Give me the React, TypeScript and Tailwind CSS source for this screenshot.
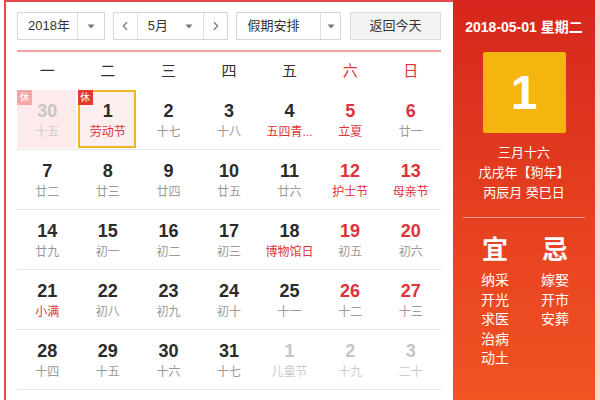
import { ChevronLeft, ChevronRight } from 'lucide-react';

type Day = {
  num: number;
  lunar: string;
  red?: boolean;
  festival?: boolean;
  other?: boolean;
  selected?: boolean;
  badge?: string;
};

const weekdays = ['一', '二', '三', '四', '五', '六', '日'];

const rows: Day[][] = [
  [
    { num: 30, lunar: '十五', other: true, badge: '休' },
    { num: 1, lunar: '劳动节', festival: true, selected: true, badge: '休' },
    { num: 2, lunar: '十七' },
    { num: 3, lunar: '十八' },
    { num: 4, lunar: '五四青...', festival: true },
    { num: 5, lunar: '立夏', red: true, festival: true },
    { num: 6, lunar: '廿一', red: true },
  ],
  [
    { num: 7, lunar: '廿二' },
    { num: 8, lunar: '廿三' },
    { num: 9, lunar: '廿四' },
    { num: 10, lunar: '廿五' },
    { num: 11, lunar: '廿六' },
    { num: 12, lunar: '护士节', red: true, festival: true },
    { num: 13, lunar: '母亲节', red: true, festival: true },
  ],
  [
    { num: 14, lunar: '廿九' },
    { num: 15, lunar: '初一' },
    { num: 16, lunar: '初二' },
    { num: 17, lunar: '初三' },
    { num: 18, lunar: '博物馆日', festival: true },
    { num: 19, lunar: '初五', red: true },
    { num: 20, lunar: '初六', red: true },
  ],
  [
    { num: 21, lunar: '小满', festival: true },
    { num: 22, lunar: '初八' },
    { num: 23, lunar: '初九' },
    { num: 24, lunar: '初十' },
    { num: 25, lunar: '十一' },
    { num: 26, lunar: '十二', red: true },
    { num: 27, lunar: '十三', red: true },
  ],
  [
    { num: 28, lunar: '十四' },
    { num: 29, lunar: '十五' },
    { num: 30, lunar: '十六' },
    { num: 31, lunar: '十七' },
    { num: 1, lunar: '儿童节', other: true },
    { num: 2, lunar: '十九', other: true },
    { num: 3, lunar: '二十', other: true },
  ],
];

const yi = ['纳采', '开光', '求医', '治病', '动土'];
const ji = ['嫁娶', '开市', '安葬'];

function Caret() {
  return (
    <svg width="8" height="5" viewBox="0 0 8 5">
      <path d="M0.5 0.5 L7.5 0.5 L4 4.5 Z" fill="#777" />
    </svg>
  );
}

function DayCell({ d }: { d: Day }) {
  let numColor = 'text-[#2b2b2b]';
  if (d.red) numColor = 'text-[#e0323a]';
  if (d.other) numColor = 'text-[#c6c6c6]';

  let lunarColor = 'text-[#9a9a9a]';
  if (d.festival) lunarColor = 'text-[#e0323a]';
  if (d.other) lunarColor = 'text-[#cccccc]';

  return (
    <div className="relative h-[60px] border-b border-[#e4e4e4] flex justify-center">
      <div
        className={
          'absolute top-0 bottom-[1px] ' +
          (d.selected
            ? 'left-0 right-[2px] bg-[#fdeef0] border-2 border-[#f2b623]'
            : d.other && d.badge
            ? 'left-0 right-[2px] bg-[#fdeaea]'
            : 'hidden')
        }
      />
      {d.badge && (
        <span
          className={
            'absolute left-0 top-0 w-[15px] h-[15px] flex items-center justify-center text-[10px] leading-none text-white ' +
            (d.other ? 'bg-[#f5a6a6]' : 'bg-[#e23a30]')
          }
        >
          {d.badge}
        </span>
      )}
      <div className="relative flex flex-col items-center pt-[10px]">
        <span className={'text-[18px] leading-[22px] font-bold ' + numColor}>{d.num}</span>
        <span className={'mt-[2px] text-[12px] leading-[16px] whitespace-nowrap ' + lunarColor}>{d.lunar}</span>
      </div>
    </div>
  );
}

export default function App() {
  return (
    <div
      className="w-[600px] h-[400px] flex bg-white overflow-hidden"
      style={{ fontFamily: '"Liberation Sans", "Noto Sans CJK SC", sans-serif' }}
    >
      <div className="w-[4px] shrink-0" />
      <div className="w-[449px] shrink-0 border-l-2 border-t-2 border-[#e8474b] pl-[11px] pr-[12px] pt-[10px]">
        {/* toolbar */}
        <div className="flex items-center h-[28px] text-[13px] text-[#333]">
          <div className="w-[88px] h-full flex border border-[#d6d6d6] bg-white">
            <div className="flex-1 flex items-center pl-[10px]">2018年</div>
            <div className="w-[27px] flex items-center justify-center border-l border-[#e0e0e0]">
              <Caret />
            </div>
          </div>
          <div className="ml-[8px] w-[116px] h-full flex border border-[#d6d6d6] bg-white">
            <div className="w-[24px] flex items-center justify-center border-r border-[#e0e0e0]">
              <ChevronLeft size={14} color="#777" strokeWidth={2} />
            </div>
            <div className="flex-1 flex items-center justify-between pl-[10px] pr-[10px]">
              <span>5月</span>
              <Caret />
            </div>
            <div className="w-[24px] flex items-center justify-center border-l border-[#e0e0e0]">
              <ChevronRight size={14} color="#777" strokeWidth={2} />
            </div>
          </div>
          <div className="ml-[8px] w-[105px] h-full flex border border-[#d6d6d6] bg-white">
            <div className="flex-1 flex items-center pl-[10px]">假期安排</div>
            <div className="w-[20px] flex items-center justify-center border-l border-[#e0e0e0]">
              <Caret />
            </div>
          </div>
          <div className="ml-[9px] w-[91px] h-full flex items-center justify-center border border-[#dcdcdc] bg-[#f3f3f3]">
            返回今天
          </div>
        </div>

        {/* red rule */}
        <div className="mt-[10px] h-[2px] bg-[#f2a0a0]" />

        {/* weekday header */}
        <div className="grid grid-cols-7 h-[38px] items-center text-[15px]">
          {weekdays.map((w, i) => (
            <div key={w} className={'text-center ' + (i >= 5 ? 'text-[#e0323a]' : 'text-[#333]')}>
              {w}
            </div>
          ))}
        </div>

        {/* days */}
        <div className="grid grid-cols-7">
          {rows.flat().map((d, i) => (
            <DayCell key={i} d={d} />
          ))}
        </div>
      </div>

      {/* right panel */}
      <div className="w-[142px] shrink-0 h-full bg-linear-to-b from-[#d6251d] to-[#f25323] text-white flex flex-col items-center pt-[18px]">
        <div className="text-[14px] leading-[18px] font-bold whitespace-nowrap">2018-05-01 星期二</div>
        <div className="mt-[16px] w-[83px] h-[81px] rounded-[2px] bg-[#f6b40e] flex items-center justify-center text-[48px] leading-none font-bold">
          1
        </div>
        <div className="mt-[10px] flex flex-col items-center text-[13px] leading-[20px] whitespace-nowrap">
          <span>三月十六</span>
          <span>戊戌年【狗年】</span>
          <span>丙辰月 癸巳日</span>
        </div>
        <div className="mt-[14px] w-[122px] h-px bg-[#f7a090]" />
        <div className="mt-[17px] flex gap-[32px] pl-[2px]">
          <div className="w-[28px] flex flex-col items-center">
            <span className="text-[26px] leading-[30px] font-bold">宜</span>
            <div className="mt-[6px] flex flex-col items-center text-[14px] leading-[19.5px]">
              {yi.map(t => (
                <span key={t}>{t}</span>
              ))}
            </div>
          </div>
          <div className="w-[28px] flex flex-col items-center">
            <span className="text-[26px] leading-[30px] font-bold">忌</span>
            <div className="mt-[6px] flex flex-col items-center text-[14px] leading-[19.5px]">
              {ji.map(t => (
                <span key={t}>{t}</span>
              ))}
            </div>
          </div>
        </div>
      </div>
      <div className="w-[5px] shrink-0 bg-[#f9d6cc]" />
    </div>
  );
}
